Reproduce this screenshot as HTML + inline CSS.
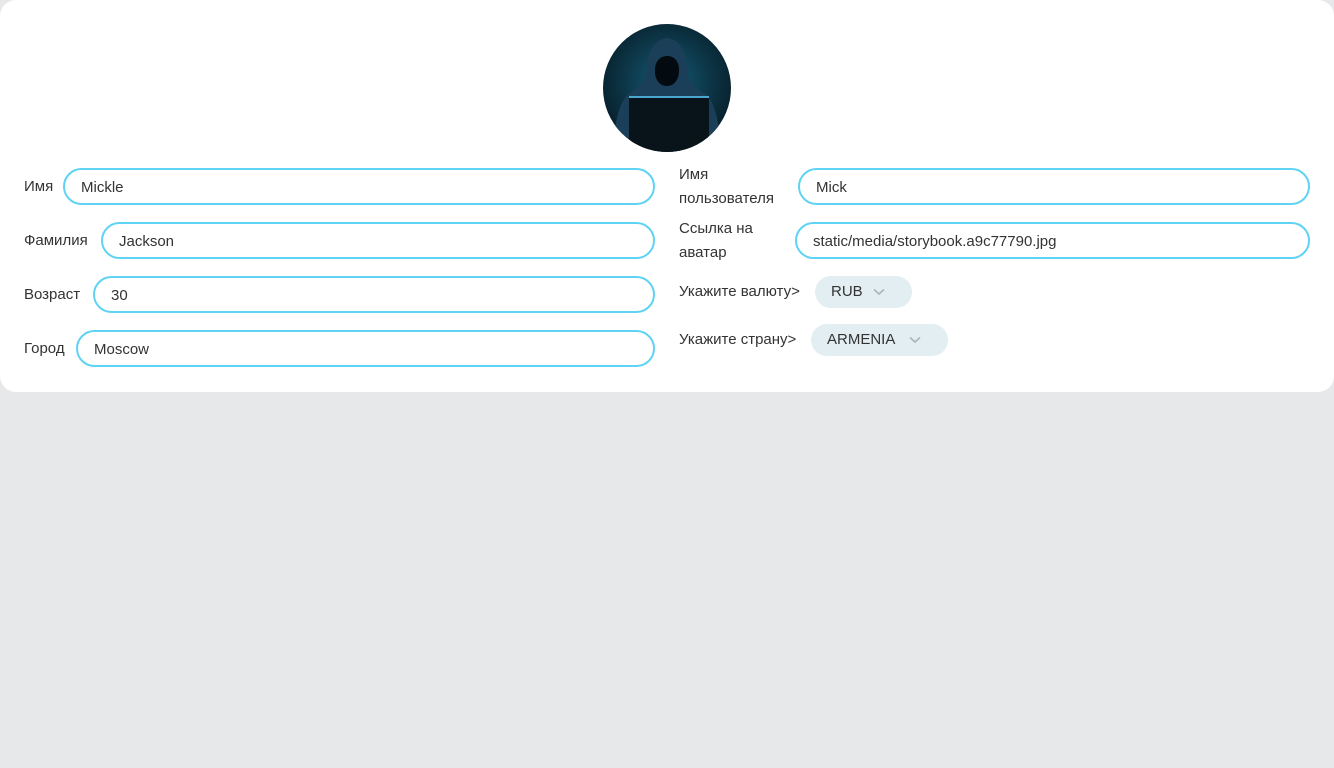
<!DOCTYPE html>
<html><head><meta charset="utf-8"><style>
*{box-sizing:border-box;margin:0;padding:0}
body{width:1334px;height:768px;background:#e7e8ea;font-family:"Liberation Sans",sans-serif;color:#333;font-size:15px;overflow:hidden}
.card{position:absolute;left:0;top:0;width:1334px;height:392px;background:#fff;border-radius:16px}
.av{position:absolute;left:603px;top:24px;width:128px;height:128px;border-radius:50%;overflow:hidden}
.lbl{position:absolute;font-size:15px;line-height:24px;color:#333}
.inp{position:absolute;height:37px;border:2px solid #5ed3f3;border-radius:19px;padding-left:16px;line-height:35px;font-size:15px;color:#333}
.sel{position:absolute;height:32px;background:#e2eef2;border-radius:16px;line-height:32px;font-size:15px;color:#333;padding-left:16px}
.sel svg{position:absolute;top:12px}
</style></head><body>
<div class="card">
<div class="av"><svg width="128" height="128" viewBox="0 0 128 128">
<defs><radialGradient id="g" cx="50%" cy="45%" r="60%"><stop offset="0" stop-color="#155a75"/><stop offset="1" stop-color="#061a24"/></radialGradient></defs>
<rect width="128" height="128" fill="url(#g)"/>
<path d="M64 14 C50 16 44 30 44 46 C44 54 40 60 26 70 C16 78 12 96 10 128 L118 128 C116 96 112 78 102 70 C88 62 84 54 84 46 C84 30 78 16 64 14Z" fill="#1b3f58"/>
<path d="M52 44 C53 36 58 32 64 32 C71 32 76 37 76 46 C76 56 71 62 64 62 C57 62 52 56 52 48Z" fill="#030a10"/>
<rect x="26" y="72" width="80" height="56" fill="#081419"/>
<rect x="26" y="72" width="80" height="2" fill="#4aa8d0"/>
</svg></div>

<div class="lbl" style="left:24px;top:175px">Имя</div>
<div class="inp" style="left:63px;top:168px;width:592px">Mickle</div>
<div class="lbl" style="left:24px;top:229px">Фамилия</div>
<div class="inp" style="left:101px;top:222px;width:554px">Jackson</div>
<div class="lbl" style="left:24px;top:283px">Возраст</div>
<div class="inp" style="left:93px;top:276px;width:562px">30</div>
<div class="lbl" style="left:24px;top:337px">Город</div>
<div class="inp" style="left:76px;top:330px;width:579px">Moscow</div>

<div class="lbl" style="left:679px;top:163px">Имя<br>пользователя</div>
<div class="inp" style="left:798px;top:168px;width:512px">Mick</div>
<div class="lbl" style="left:679px;top:217px">Ссылка на<br>аватар</div>
<div class="inp" style="left:795px;top:222px;width:515px">static/media/storybook.a9c77790.jpg</div>
<div class="lbl" style="left:679px;top:280px">Укажите валюту&gt;</div>
<div class="sel" style="left:815px;top:276px;width:97px">RUB<svg style="left:58px" width="12" height="8" viewBox="0 0 12 8"><path d="M1 1.5 L6 6 L11 1.5" stroke="#a9b5bb" stroke-width="1.6" fill="none"/></svg></div>
<div class="lbl" style="left:679px;top:328px">Укажите страну&gt;</div>
<div class="sel" style="left:811px;top:324px;width:137px">ARMENIA<svg style="left:98px" width="12" height="8" viewBox="0 0 12 8"><path d="M1 1.5 L6 6 L11 1.5" stroke="#a9b5bb" stroke-width="1.6" fill="none"/></svg></div>
</div>
</body></html>
